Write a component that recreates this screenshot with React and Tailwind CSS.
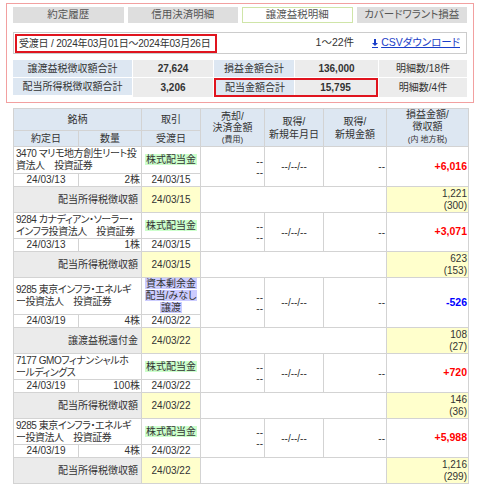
import React from 'react'

const RED = 'text-[#ff0000]'
const BLUE = 'text-[#0000ff]'

const rows = [
  {
    name: ['3470 マリモ地方創生リート投', '資法人　投資証券'],
    kind: ['株式配当金'], kindBg: 'bg-[#ccffcc]', nameH: 'h-[27px]',
    trade: '24/03/13', qty: '2株', settle: '24/03/15',
    pl: '+6,016', plColor: RED,
    taxLabel: '配当所得税徴収額', taxDate: '24/03/15', tax: ['1,221', '(300)'],
  },
  {
    name: ['9284 カナディアン・ソーラー・', 'インフラ投資法人　投資証券'],
    kind: ['株式配当金'], kindBg: 'bg-[#ccffcc]', nameH: 'h-[26px]',
    trade: '24/03/13', qty: '1株', settle: '24/03/15',
    pl: '+3,071', plColor: RED,
    taxLabel: '配当所得税徴収額', taxDate: '24/03/15', tax: ['623', '(153)'],
  },
  {
    name: ['9285 東京インフラ・エネルギ', 'ー投資法人　投資証券'],
    kind: ['資本剰余金', '配当/みなし', '譲渡'], kindBg: 'bg-[#ccccff]', nameH: 'h-[37px]',
    trade: '24/03/19', qty: '4株', settle: '24/03/22',
    pl: '-526', plColor: BLUE,
    taxLabel: '譲渡益税還付金', taxDate: '24/03/22', tax: ['108', '(27)'],
  },
  {
    name: ['7177 GMOフィナンシャルホ', 'ールディングス'],
    kind: ['株式配当金'], kindBg: 'bg-[#ccffcc]', nameH: 'h-[26px]',
    trade: '24/03/19', qty: '100株', settle: '24/03/22',
    pl: '+720', plColor: RED,
    taxLabel: '配当所得税徴収額', taxDate: '24/03/22', tax: ['146', '(36)'],
  },
  {
    name: ['9285 東京インフラ・エネルギ', 'ー投資法人　投資証券'],
    kind: ['株式配当金'], kindBg: 'bg-[#ccffcc]', nameH: 'h-[26px]',
    trade: '24/03/19', qty: '4株', settle: '24/03/22',
    pl: '+5,988', plColor: RED,
    taxLabel: '配当所得税徴収額', taxDate: '24/03/22', tax: ['1,216', '(299)'],
  },
]

const td = 'border border-[#d3d3d3] p-0'

function Tab({ label, active }) {
  return (
    <div
      className={
        'h-[16px] flex items-center justify-center text-[10.5px] text-[#555] ' +
        (active ? 'bg-white border border-[#cfe5a8]' : 'bg-[#dedede]')
      }
    >
      {label}
    </div>
  )
}

function StockBlock({ r }) {
  return (
    <>
      <tr className={r.nameH}>
        <td colSpan={2} className={td + ' pl-[2px] text-left leading-[12px] tracking-[-0.45px] whitespace-nowrap overflow-hidden'}>
          {r.name[0]}<br />{r.name[1]}
        </td>
        <td className={td + ' text-center leading-[12px]'}>
          {r.kind.map((k, i) => (
            <React.Fragment key={i}>
              <span className={r.kindBg + ' px-px'}>{k}</span>
              {i < r.kind.length - 1 && <br />}
            </React.Fragment>
          ))}
        </td>
        <td rowSpan={2} className={td + ' text-right pr-[1px] leading-[11px]'}>--<br />--</td>
        <td rowSpan={2} className={td + ' text-center'}>--/--/--</td>
        <td rowSpan={2} className={td + ' text-right pr-[1px]'}>--</td>
        <td rowSpan={2} className={td + ' text-right pr-[1px] font-bold text-[10.5px] ' + r.plColor}>{r.pl}</td>
      </tr>
      <tr className="h-[13px] leading-[12px]">
        <td className={td + ' text-center'}>{r.trade}</td>
        <td className={td + ' text-right pr-[1px]'}>{r.qty}</td>
        <td className={td + ' text-center'}>{r.settle}</td>
      </tr>
      <tr className="h-[26px]">
        <td colSpan={2} className={td + ' bg-[#ebebeb] text-right pr-[3px]'}>{r.taxLabel}</td>
        <td className={td + ' bg-[#ffffcc] text-center'}>{r.taxDate}</td>
        <td colSpan={3} className={td + ' bg-white'}></td>
        <td className={td + ' bg-[#ffffcc] text-right pr-[1px] leading-[12px]'}>
          {r.tax[0]}<br />{r.tax[1]}
        </td>
      </tr>
    </>
  )
}

export default function App() {
  return (
    <div className="min-h-[493px] bg-white text-[#333] text-[10px] font-['Liberation_Sans','Noto_Sans_CJK_JP',sans-serif] [font-feature-settings:'palt'] pt-[3px] px-[6px]">
      {/* 上部パネル */}
      <div className="border border-[#f2a0a0] px-[6px] pt-[3px] pb-[5px]">
        <div className="grid grid-cols-4 gap-[4px]">
          <Tab label="約定履歴" />
          <Tab label="信用決済明細" />
          <Tab label="譲渡益税明細" active />
          <Tab label="カバードワラント損益" />
        </div>

        <div className="mt-[9px] h-[22px] border border-[#cccccc] flex items-center pl-[1px] pr-[6px]">
          <div className="h-[19px] w-[202px] border-2 border-[#e0141e] flex items-center pl-[2px] text-[10px] tracking-[-0.2px] whitespace-nowrap overflow-hidden">
            受渡日 / 2024年03月01日～2024年03月26日
          </div>
          <div className="flex-1" />
          <span className="text-[10.5px]">1～22件</span>
          <a className="ml-[18px] flex items-center gap-[3px] text-[#1a3ec8] underline text-[10.5px]">
            <svg width="6" height="9" viewBox="0 0 6 9">
              <rect x="2" y="0" width="2" height="4" fill="#1a3ec8" />
              <path d="M0 4 H6 L3 7 Z" fill="#1a3ec8" />
              <rect x="0" y="8" width="6" height="1" fill="#1a3ec8" />
            </svg>
            CSVダウンロード
          </a>
        </div>

        <div className="mt-[6px] grid grid-cols-[119px_80px_80px_83px_1fr] gap-px">
          <div className="h-[17px] bg-[#dde7f2] flex items-center justify-center">譲渡益税徴収額合計</div>
          <div className="bg-[#ececec] flex items-center justify-center font-bold">27,624</div>
          <div className="bg-[#dde7f2] flex items-center justify-center">損益金額合計</div>
          <div className="bg-[#ececec] flex items-center justify-center font-bold">136,000</div>
          <div className="bg-[#ececec] flex items-center justify-center">明細数/18件</div>

          <div className="h-[17px] bg-[#dde7f2] flex items-center justify-center">配当所得税徴収額合計</div>
          <div className="bg-[#ececec] flex items-center justify-center font-bold">3,206</div>
          <div className="col-span-2 flex border-2 border-[#e0141e]">
            <div className="w-[78px] bg-[#dde7f2] flex items-center justify-center">配当金額合計</div>
            <div className="flex-1 ml-px bg-[#ececec] flex items-center justify-center font-bold">15,795</div>
          </div>
          <div className="bg-[#ececec] flex items-center justify-center">明細数/4件</div>
        </div>
      </div>

      {/* 明細テーブル */}
      <table className="mt-[5px] mx-[7px] w-[455px] table-fixed border-collapse">
        <colgroup>
          <col className="w-[65px]" />
          <col className="w-[63px]" />
          <col className="w-[59px]" />
          <col className="w-[64px]" />
          <col className="w-[59px]" />
          <col className="w-[63px]" />
          <col className="w-[82px]" />
        </colgroup>
        <thead className="bg-[#dde7f2]">
          <tr className="h-[22px]">
            <th colSpan={2} className={td + ' font-normal'}>銘柄</th>
            <th className={td + ' font-normal'}>取引</th>
            <th rowSpan={2} className={td + ' font-normal leading-[11px]'}>
              売却/<br />決済金額<br /><span className="text-[8px]">(費用)</span>
            </th>
            <th rowSpan={2} className={td + ' font-normal leading-[13px]'}>取得/<br />新規年月日</th>
            <th rowSpan={2} className={td + ' font-normal leading-[13px]'}>取得/<br />新規金額</th>
            <th rowSpan={2} className={td + ' font-normal leading-[12px]'}>
              損益金額/<br />徴収額<br /><span className="text-[8px]">(内 地方税)</span>
            </th>
          </tr>
          <tr className="h-[15px]">
            <th className={td + ' font-normal'}>約定日</th>
            <th className={td + ' font-normal'}>数量</th>
            <th className={td + ' font-normal'}>受渡日</th>
          </tr>
        </thead>
        <tbody>
          {rows.map((r, i) => <StockBlock key={i} r={r} />)}
        </tbody>
      </table>
    </div>
  )
}
